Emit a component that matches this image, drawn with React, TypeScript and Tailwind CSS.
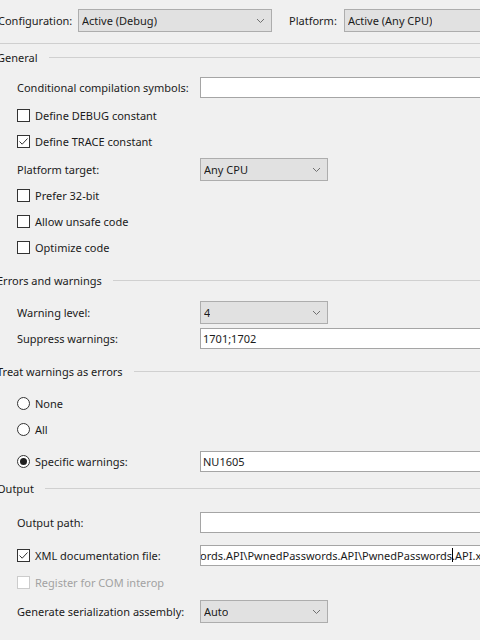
import type { ReactNode } from "react";

const font = { fontFamily: '"Noto Sans", "Open Sans", Arial, sans-serif' };

function Chevron() {
  return (
    <svg width="9" height="6" viewBox="0 0 9 6" className="shrink-0">
      <path d="M1 1 L4.5 4.5 L8 1" fill="none" stroke="#707070" strokeWidth="1" />
    </svg>
  );
}

function Combo({ value, className }: { value: string; className: string }) {
  return (
    <div
      className={`flex h-[23px] shrink-0 items-center justify-between border border-[#adadad] bg-[#e1e1e1] pr-[6px] pl-[3px] ${className}`}
    >
      <span className="truncate">{value}</span>
      <Chevron />
    </div>
  );
}

function TextBox({ value, className = "" }: { value?: ReactNode; className?: string }) {
  return (
    <div
      className={`flex h-[21px] w-[320px] shrink-0 items-center overflow-hidden border border-[#a5a5a5] bg-white pl-[2px] whitespace-nowrap ${className}`}
    >
      {value}
    </div>
  );
}

function Checkbox({ checked, disabled }: { checked?: boolean; disabled?: boolean }) {
  return (
    <div
      className={`flex h-[13px] w-[13px] shrink-0 items-center justify-center border bg-white ${
        disabled ? "border-[#cccccc]" : "border-[#333333]"
      }`}
    >
      {checked && (
        <svg width="11" height="11" viewBox="0 0 11 11">
          <path d="M1.5 5.5 L4.2 8.2 L9.5 2.5" fill="none" stroke="#333333" strokeWidth="1" />
        </svg>
      )}
    </div>
  );
}

function Radio({ checked }: { checked?: boolean }) {
  return (
    <div className="flex h-[13px] w-[13px] shrink-0 items-center justify-center rounded-full border border-[#333333] bg-white">
      {checked && <div className="h-[7px] w-[7px] rounded-full bg-[#1f1f1f]" />}
    </div>
  );
}

function SectionHeader({ title, className }: { title: string; className: string }) {
  return (
    <div className={`flex h-[22px] items-center ${className}`}>
      <span className="-ml-[3px] shrink-0">{title}</span>
      <div className="ml-[11px] h-px flex-1 bg-[#d0d0d0]" />
    </div>
  );
}

function CheckRow({
  label,
  checked,
  disabled,
  className,
  children,
}: {
  label: string;
  checked?: boolean;
  disabled?: boolean;
  className: string;
  children?: ReactNode;
}) {
  return (
    <div className={`flex h-[22px] items-center pl-[17px] ${className}`}>
      <div className="flex w-[183px] shrink-0 items-center gap-[5px]">
        <Checkbox checked={checked} disabled={disabled} />
        <span className={disabled ? "text-[#a2a2a2]" : ""}>{label}</span>
      </div>
      {children}
    </div>
  );
}

function RadioRow({
  label,
  checked,
  className,
  children,
}: {
  label: string;
  checked?: boolean;
  className: string;
  children?: ReactNode;
}) {
  return (
    <div className={`flex h-[22px] items-center pl-[17px] ${className}`}>
      <div className="flex w-[183px] shrink-0 items-center gap-[5px]">
        <Radio checked={checked} />
        <span>{label}</span>
      </div>
      {children}
    </div>
  );
}

function FieldRow({ label, className, children }: { label: string; className: string; children: ReactNode }) {
  return (
    <div className={`flex items-center pl-[17px] ${className}`}>
      <span className="w-[183px] shrink-0">{label}</span>
      {children}
    </div>
  );
}

export default function App() {
  return (
    <div
      className="h-[640px] w-[480px] overflow-hidden bg-[#f0f0f0] text-[11px] leading-[15px] whitespace-nowrap text-[#1b1b1b]"
      style={font}
    >
      <div className="h-[44px] border-b border-[#cfcfcf] pt-[9px]">
        <div className="flex h-[23px] items-center">
          <span className="-ml-[2px] w-[80px] shrink-0">Configuration:</span>
          <Combo value="Active (Debug)" className="w-[194px]" />
          <span className="ml-[17px] w-[55px] shrink-0">Platform:</span>
          <Combo value="Active (Any CPU)" className="w-[200px]" />
        </div>
      </div>

      <SectionHeader title="General" className="mt-[2px]" />
      <FieldRow label="Conditional compilation symbols:" className="mt-[9px] h-[21px]">
        <TextBox />
      </FieldRow>
      <CheckRow label="Define DEBUG constant" className="mt-[6px]" />
      <CheckRow label="Define TRACE constant" checked className="mt-[4px]" />
      <FieldRow label="Platform target:" className="mt-[6px] h-[23px]">
        <Combo value="Any CPU" className="w-[128px]" />
      </FieldRow>
      <CheckRow label="Prefer 32-bit" className="mt-[3px]" />
      <CheckRow label="Allow unsafe code" className="mt-[4px]" />
      <CheckRow label="Optimize code" className="mt-[4px]" />

      <SectionHeader title="Errors and warnings" className="mt-[11px]" />
      <FieldRow label="Warning level:" className="mt-[10px] h-[23px]">
        <Combo value="4" className="w-[128px]" />
      </FieldRow>
      <FieldRow label="Suppress warnings:" className="mt-[4px] h-[21px]">
        <TextBox value="1701;1702" />
      </FieldRow>

      <SectionHeader title="Treat warnings as errors" className="mt-[11px]" />
      <RadioRow label="None" className="mt-[10px]" />
      <RadioRow label="All" className="mt-[4px]" />
      <RadioRow label="Specific warnings:" checked className="mt-[10px] h-[21px]">
        <TextBox value="NU1605" />
      </RadioRow>

      <SectionHeader title="Output" className="mt-[5px]" />
      <FieldRow label="Output path:" className="mt-[13px] h-[21px]">
        <TextBox />
      </FieldRow>
      <CheckRow label="XML documentation file:" checked className="mt-[11px] h-[21px]">
        <TextBox
          className="border-[#0078d7] pl-0"
          value={
            <span className="-ml-[3px] flex items-center">
              ords.API\PwnedPasswords.API\PwnedPasswords
              <span className="mx-[-0.5px] inline-block h-[14px] w-px bg-black" />
              .API.xml
            </span>
          }
        />
      </CheckRow>
      <CheckRow label="Register for COM interop" disabled className="mt-[5px]" />
      <FieldRow label="Generate serialization assembly:" className="mt-[7px] h-[23px]">
        <Combo value="Auto" className="w-[128px]" />
      </FieldRow>
    </div>
  );
}
